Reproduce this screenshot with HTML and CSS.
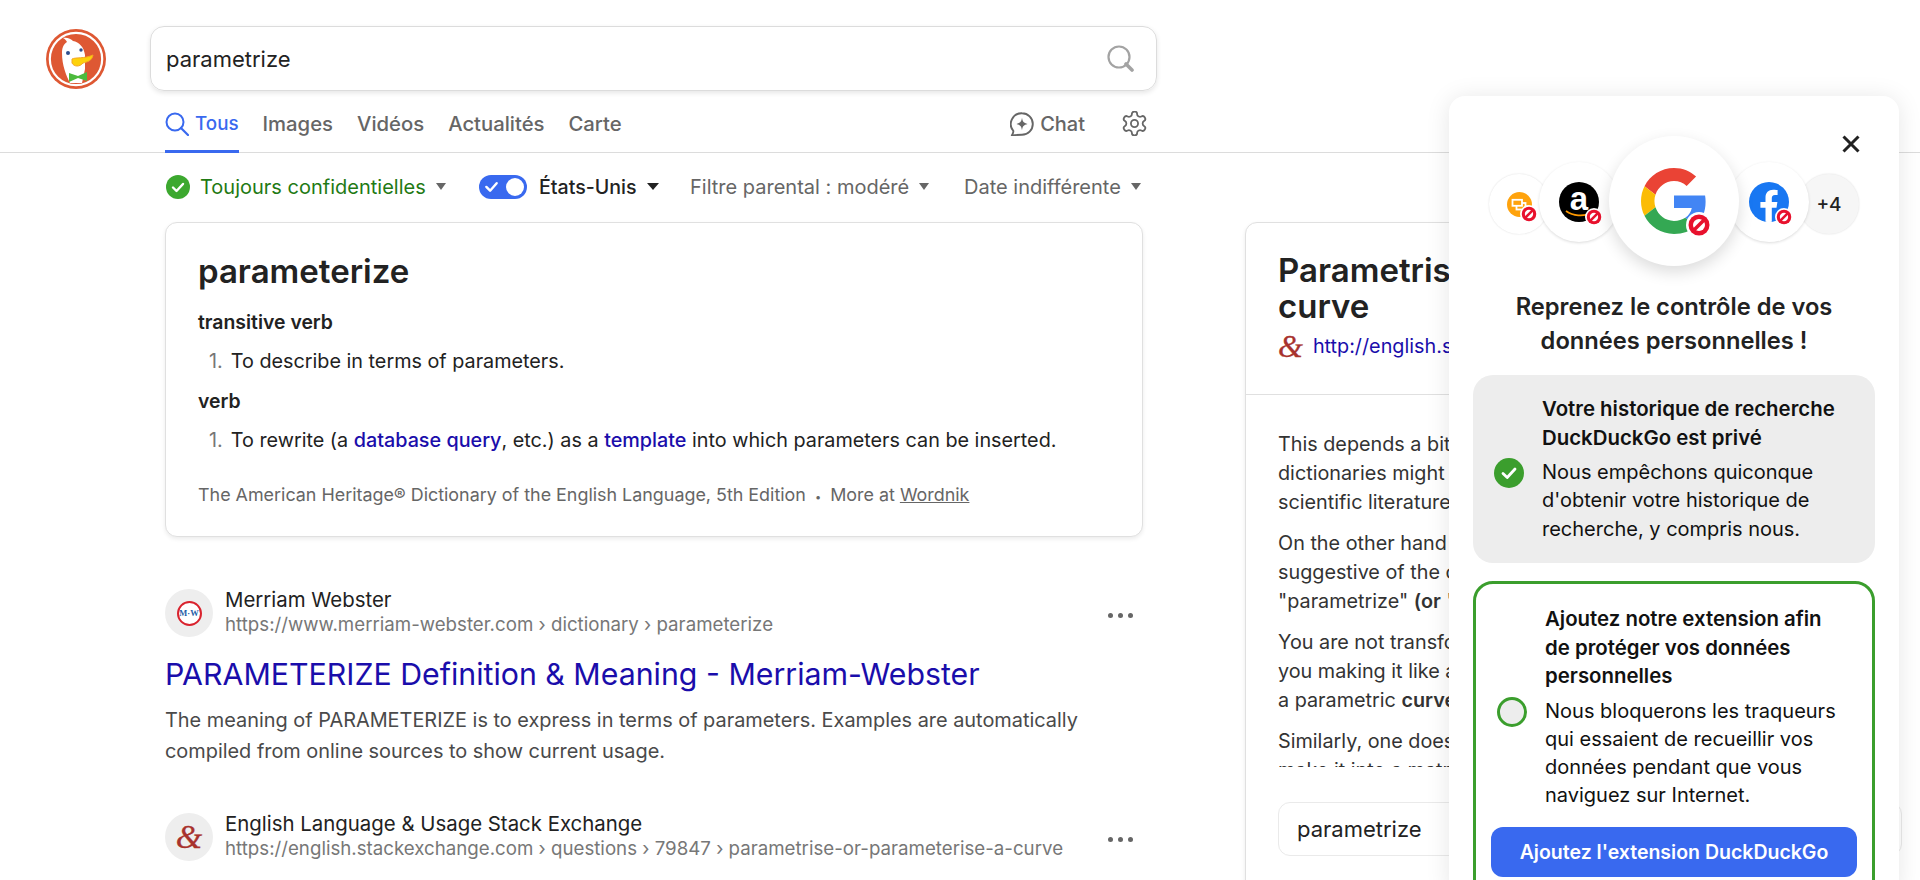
FILE: index.html
```html
<!DOCTYPE html>
<html lang="fr">
<head>
<meta charset="utf-8">
<title>parametrize at DuckDuckGo</title>
<link rel="stylesheet" href="styles.css">
</head>
<body>
<svg class="defs" width="0" height="0" aria-hidden="true">
  <symbol id="block" viewBox="-13 -13 26 26">
    <circle r="13" fill="#fff"/>
    <circle r="10.5" fill="#e8112d"/>
    <circle r="6" fill="#fff"/>
    <path d="M-5.5 5.5 5.5-5.5" stroke="#e8112d" stroke-width="3.6"/>
  </symbol>
</svg>
<div class="page">
  <header class="top">
    <div class="top-row">
      <svg class="logo" viewBox="0 0 60 60" aria-label="DuckDuckGo">
        <circle cx="30" cy="30" r="30" fill="#de5833"/>
        <circle cx="30" cy="30" r="26.2" fill="none" stroke="#fff" stroke-width="2.2"/>
        <path d="M17 9C21 8 25 10 27 12 33 13 38 18 39 26L39 40 36 54 24 54C20 46 16 36 16 24 16 18 18 15 21 13 20 11 19 10 17 9Z" fill="#fff"/>
        <circle cx="22" cy="24" r="2" fill="#2d4f8e"/>
        <circle cx="35" cy="21" r="1.7" fill="#2d4f8e"/>
        <path d="M26 30C30 28 38 30 47 26 46 32 41 33 37 34 34 38 28 38 26 34Z" fill="#fdd20a" stroke="#f5a623" stroke-width="1"/>
        <path d="M23 44 32 47 41 43 41 52 32 49 23 53Z" fill="#4cba3c"/>
      </svg>
      <div class="search">
        <span class="search-text">parametrize</span>
        <svg class="search-icon" viewBox="0 0 27 27"><circle cx="12" cy="12" r="10.5" fill="none" stroke="#a3a3a3" stroke-width="2.2"/><path d="M19 19 25 25" stroke="#a3a3a3" stroke-width="3.6" stroke-linecap="round"/></svg>
      </div>
    </div>
    <nav class="tabs">
      <a class="tab active"><svg class="tab-icon" viewBox="0 0 24 24"><circle cx="10" cy="10" r="8.5" fill="none" stroke="#3969ef" stroke-width="2"/><path d="M16 16 23 23" stroke="#3969ef" stroke-width="2.2" stroke-linecap="round"/></svg>Tous</a>
      <a class="tab">Images</a>
      <a class="tab">Vidéos</a>
      <a class="tab">Actualités</a>
      <a class="tab">Carte</a>
      <span class="spacer"></span>
      <a class="tab chat"><svg class="chat-icon" viewBox="0 0 24 24"><path d="M12 1.2A10.8 10.8 0 0 1 12 22.8C8 22.8 5 23 1.8 23.6 2.8 22 3.4 20.6 3.4 19A10.8 10.8 0 0 1 12 1.2Z" fill="none" stroke="#666" stroke-width="1.9" stroke-linejoin="round"/><path d="M12 5.8C12.6 9.6 13.6 11 17.6 12 13.6 13 12.6 14.4 12 18.2 11.4 14.4 10.4 13 6.4 12 10.4 11 11.4 9.6 12 5.8Z" fill="#666"/></svg>Chat</a>
      <svg class="gear" viewBox="1.5 1.5 21 21" fill="none" stroke="#666" stroke-width="1.5"><path d="M12.22 2h-.44a2 2 0 0 0-2 2v.18a2 2 0 0 1-1 1.73l-.43.25a2 2 0 0 1-2 0l-.15-.08a2 2 0 0 0-2.73.73l-.22.38a2 2 0 0 0 .73 2.73l.15.1a2 2 0 0 1 1 1.72v.51a2 2 0 0 1-1 1.74l-.15.09a2 2 0 0 0-.73 2.73l.22.38a2 2 0 0 0 2.73.73l.15-.08a2 2 0 0 1 2 0l.43.25a2 2 0 0 1 1 1.73V20a2 2 0 0 0 2 2h.44a2 2 0 0 0 2-2v-.18a2 2 0 0 1 1-1.73l.43-.25a2 2 0 0 1 2 0l.15.08a2 2 0 0 0 2.73-.73l.22-.39a2 2 0 0 0-.73-2.73l-.15-.08a2 2 0 0 1-1-1.74v-.5a2 2 0 0 1 1-1.74l.15-.09a2 2 0 0 0 .73-2.73l-.22-.38a2 2 0 0 0-2.73-.73l-.15.08a2 2 0 0 1-2 0l-.43-.25a2 2 0 0 1-1-1.73V4a2 2 0 0 0-2-2z"/><circle cx="12" cy="12" r="3"/></svg>
    </nav>
  </header>

  <div class="filters">
    <span class="filter private"><svg class="check" viewBox="0 0 24 24"><circle cx="12" cy="12" r="12" fill="#3ca82f"/><path d="M7 12.5 10.5 16 17 9" fill="none" stroke="#fff" stroke-width="2.4" stroke-linecap="round" stroke-linejoin="round"/></svg>Toujours confidentielles<i class="caret"></i></span>
    <span class="filter region"><span class="toggle"><svg class="toggle-check" viewBox="0 0 16 16"><path d="M2.5 8.5 6.5 12.5 13.5 4.5" fill="none" stroke="#fff" stroke-width="2.6" stroke-linecap="round" stroke-linejoin="round"/></svg><span class="knob"></span></span>États-Unis<i class="caret dark"></i></span>
    <span class="filter parental">Filtre parental : modéré<i class="caret"></i></span>
    <span class="filter date">Date indifférente<i class="caret"></i></span>
  </div>

  <main class="main">
    <div class="results">
      <section class="card def">
        <h2 class="def-word">parameterize</h2>
        <h3 class="def-pos">transitive verb</h3>
        <ol class="def-list"><li>To describe in terms of parameters.</li></ol>
        <h3 class="def-pos">verb</h3>
        <ol class="def-list"><li>To rewrite (a <a class="link">database query</a>, etc.) as a <a class="link">template</a> into which parameters can be inserted.</li></ol>
        <p class="def-source">The American Heritage® Dictionary of the English Language, 5th Edition <span class="bullet">•</span> More at <u>Wordnik</u></p>
      </section>

      <article class="result first">
        <div class="result-head">
          <span class="fav"><span class="mw">M·W</span></span>
          <div class="result-site">
            <div class="site-name">Merriam Webster</div>
            <div class="site-url">https://www.merriam-webster.com › dictionary › parameterize</div>
          </div>
          <span class="dots"><i></i><i></i><i></i></span>
        </div>
        <h2 class="result-title">PARAMETERIZE Definition &amp; Meaning - Merriam-Webster</h2>
        <p class="snippet">The meaning of PARAMETERIZE is to express in terms of parameters. Examples are automatically compiled from online sources to show current usage.</p>
      </article>

      <article class="result">
        <div class="result-head">
          <span class="fav"><span class="amp">&amp;</span></span>
          <div class="result-site">
            <div class="site-name">English Language &amp; Usage Stack Exchange</div>
            <div class="site-url">https://english.stackexchange.com › questions › 79847 › parametrise-or-parameterise-a-curve</div>
          </div>
          <span class="dots"><i></i><i></i><i></i></span>
        </div>
      </article>
    </div>

    <aside class="card side">
      <div class="side-head">
        <h2 class="side-title">Parametrise or parameterise a<br>curve</h2>
        <div class="side-link"><span class="amp small">&amp;</span><a class="link plain">http://english.stackexchange.com</a></div>
      </div>
      <div class="side-body">
        <div class="side-text">
          <p>This depends a bit on how<br>dictionaries might list it in<br>scientific literature it appears</p>
          <p>On the other hand it is<br>suggestive of the original<br>"parametrize" <b>(or</b> "parametrise"</p>
          <p>You are not transforming it<br>you making it like a new<br>a parametric <b>curve</b> is given</p>
          <p>Similarly, one does not say<br>make it into a matrix form</p>
        </div>
        <div class="side-input">parametrize</div>
      </div>
    </aside>
  </main>

  <aside class="popup">
    <svg class="close" viewBox="0 0 18 18"><path d="M1.5 1.5 16.5 16.5M16.5 1.5 1.5 16.5" stroke="#222" stroke-width="3"/></svg>
    <div class="trackers">
      <span class="tr tr-s"><svg class="fav-orange" viewBox="0 0 25 25"><circle cx="12.500" cy="12.500" r="12.500" fill="#ffa30d"/><rect x="9.500" y="11" width="9" height="6.500" fill="#ffa30d" stroke="#fff" stroke-width="1.800"/><rect x="5.500" y="7.800" width="9.500" height="6" fill="#ffa30d" stroke="#fff" stroke-width="1.800"/></svg><svg class="blk blk-s"><use href="#block"/></svg></span>
      <span class="tr tr-m"><span class="amz">a<svg class="smile" viewBox="0 0 28 8"><path d="M1 1C8 6 18 7 27 3" fill="none" stroke="#f90" stroke-width="1.800"/></svg></span><svg class="blk blk-m"><use href="#block"/></svg></span>
      <span class="tr tr-l"><svg class="g" viewBox="0 0 48 48"><path fill="#EA4335" d="M24 9.5c3.54 0 6.71 1.22 9.21 3.6l6.85-6.85C35.9 2.38 30.47 0 24 0 14.62 0 6.51 5.38 2.56 13.22l7.98 6.19C12.43 13.72 17.74 9.5 24 9.5z"/><path fill="#4285F4" d="M46.98 24.55c0-1.57-.15-3.09-.38-4.55H24v9.02h12.94c-.58 2.96-2.26 5.48-4.78 7.18l7.73 6c4.51-4.18 7.09-10.36 7.09-17.65z"/><path fill="#FBBC05" d="M10.53 28.59c-.48-1.45-.76-2.99-.76-4.59s.27-3.14.76-4.59l-7.98-6.19C.92 16.46 0 20.12 0 24c0 3.88.92 7.54 2.56 10.78l7.97-6.19z"/><path fill="#34A853" d="M24 48c6.48 0 11.93-2.13 15.89-5.81l-7.73-6c-2.15 1.45-4.92 2.3-8.16 2.3-6.26 0-11.57-4.22-13.47-9.91l-7.98 6.19C6.51 42.62 14.62 48 24 48z"/></svg><svg class="blk blk-l"><use href="#block"/></svg></span>
      <span class="tr tr-m"><svg class="fb" viewBox="0 0 40 40"><circle cx="20" cy="20" r="20" fill="#1877f2"/><path d="M27.500 25.800 28.400 20H22.800V16.200C22.800 14.600 23.600 13.100 26 13.100H28.600V8.100S26.300 7.700 24.100 7.700C19.500 7.700 16.500 10.500 16.500 15.500V20H11.400V25.800H16.500V39.800A20 20 0 0 0 22.800 39.800V25.800Z" fill="#fff"/></svg><svg class="blk blk-m"><use href="#block"/></svg></span>
      <span class="tr tr-s more">+4</span>
    </div>
    <h2 class="popup-title">Reprenez le contrôle de vos<br>données personnelles !</h2>
    <div class="step done">
      <svg class="step-check" viewBox="0 0 30 30"><circle cx="15" cy="15" r="15" fill="#3b9e2d"/><path d="M9 15.500 13.200 19.500 21 11" fill="none" stroke="#fff" stroke-width="2.800" stroke-linecap="round" stroke-linejoin="round"/></svg>
      <div class="step-body">
        <h3>Votre historique de recherche DuckDuckGo est privé</h3>
        <p>Nous empêchons quiconque d'obtenir votre historique de recherche, y compris nous.</p>
      </div>
    </div>
    <div class="step current">
      <div class="step-row">
        <span class="step-dot"></span>
        <div class="step-body">
          <h3>Ajoutez notre extension afin de protéger vos données personnelles</h3>
          <p>Nous bloquerons les traqueurs qui essaient de recueillir vos données pendant que vous naviguez sur Internet.</p>
        </div>
      </div>
      <a class="cta">Ajoutez l'extension DuckDuckGo</a>
    </div>
  </aside>
</div>
</body>
</html>
```
FILE: styles.css
```css
* { box-sizing: border-box; }
html, body { margin: 0; height: 100%; }
body { background: #fff; color: #222; font-family: Inter, "Liberation Sans", sans-serif; font-size: 18px; overflow: hidden; }
h2, h3, p, ol { margin: 0; padding: 0; }
.defs { position: absolute; }
.page { position: relative; width: 1920px; height: 880px; overflow: hidden; }

/* header */
.top { height: 153px; border-bottom: 1px solid #dcdcdc; padding-top: 26px; }
.top-row { display: flex; align-items: center; padding-left: 46px; height: 65px; }
.logo { width: 60px; height: 60px; flex: none; }
.search { width: 1007px; height: 65px; margin-left: 44px; border: 1px solid #dcdcdc; border-radius: 14px; box-shadow: 0 2px 5px rgba(0,0,0,.1); display: flex; align-items: center; justify-content: space-between; padding: 0 22px 0 15px; }
.search-text { font-size: 22px; color: #222; }
.search-icon { width: 27px; height: 27px; }
.tabs { display: flex; align-items: center; gap: 24px; margin-left: 165px; width: 982px; height: 61px; }
.tab { display: flex; align-items: center; height: 100%; padding-top: 6px; font-size: 20.300px; font-weight: 500; color: #666; border-bottom: 3px solid transparent; margin-bottom: -1px; }
.tab.active { color: #3969ef; border-bottom-color: #3969ef; font-size: 18.800px; }
.tab-icon { width: 24px; height: 24px; margin-right: 6px; }
.spacer { flex: 1; }
.chat-icon { width: 24px; height: 24px; margin-right: 6px; }
.chat { margin-right: 13px; font-size: 20px; }
.gear { width: 25px; height: 25px; margin-top: 3px; }

/* filters */
.filters { display: flex; align-items: center; height: 66px; margin-left: 166px; padding-top: 1px; font-size: 20px; color: #666; }
.filter { display: flex; align-items: center; white-space: nowrap; }
.private { color: #1f7a14; width: 313px; }
.region { color: #222; font-weight: 500; width: 211px; font-size: 19.600px; }
.parental { width: 274px; }
.caret { width: 0; height: 0; margin-left: 10px; border-left: 5px solid transparent; border-right: 5px solid transparent; border-top: 7px solid #666; }
.caret.dark { border-top-color: #222; border-left-width: 6px; border-right-width: 6px; }
.check { width: 24px; height: 24px; margin-right: 10px; }
.toggle { width: 48px; height: 24px; border-radius: 12px; background: #3969ef; display: flex; align-items: center; justify-content: space-between; padding: 0 3px 0 5px; margin-right: 12px; }
.toggle-check { width: 15px; height: 15px; }
.knob { width: 18px; height: 18px; border-radius: 50%; background: #fff; }

/* main */
.main { display: flex; align-items: flex-start; margin-left: 165px; padding-top: 3px; gap: 102px; }
.results { width: 978px; flex: none; }
.card { border: 1px solid #e0e0e0; border-radius: 12px; background: #fff; }
.def { height: 315px; padding: 28px 32px; box-shadow: 0 2px 4px rgba(0,0,0,.08); }
.def-word { font-size: 33px; font-weight: 600; line-height: 40px; }
.def-pos { font-size: 19.400px; font-weight: 600; line-height: 28px; margin-top: 17px; }
.def-list { list-style: none; margin-top: 11px; padding-left: 11px; font-size: 19.800px; line-height: 28px; }
.def-list + .def-pos { margin-top: 12px; }
.def-list li::before { content: "1."; color: #777; margin-right: 8px; }
.link { color: #1a0dab; font-weight: 500; }
.def-source { margin-top: 28px; font-size: 17.900px; line-height: 26px; color: #666; white-space: nowrap; }
.bullet { font-size: 11px; margin: 0 4px; }

.first { margin-top: 52px; }
.result-head { display: flex; align-items: center; height: 48px; }
.fav { flex: none; width: 48px; height: 48px; border-radius: 50%; background: #eeeeee; display: flex; align-items: center; justify-content: center; margin-right: 12px; }
.mw { width: 25px; height: 25px; border-radius: 50%; border: 2px solid #d9232e; background: #fff; color: #1f5fa8; font: bold 8.500px "Liberation Serif", serif; display: flex; align-items: center; justify-content: center; white-space: nowrap; }
.amp { font: italic 34px/1 "Liberation Serif", serif; color: #a8322d; -webkit-text-stroke: .3px #a8322d; }
.amp.small { font-size: 32px; }
.result-site { flex: 1; min-width: 0; margin-top: -1px; }
.site-name { font-size: 20.400px; line-height: 25px; color: #222; }
.site-url { font-size: 18.700px; line-height: 25.500px; color: #777; white-space: nowrap; }
.dots { display: flex; gap: 5px; margin: 4px 10px 0 0; }
.dots i { width: 5px; height: 5px; border-radius: 50%; background: #666; }
.result-title { font-size: 30.300px; font-weight: 400; line-height: 40px; color: #1a0dab; margin-top: 17px; white-space: nowrap; }
.snippet { font-size: 19.900px; line-height: 31px; color: #4a4a4a; margin-top: 11px; width: 960px; }
.result + .result { margin-top: 46px; }

/* sidebar */
.side { flex: none; width: 640px; height: 700px; border-radius: 12px; box-shadow: 0 2px 4px rgba(0,0,0,.08); }
.side-head { height: 172px; padding: 29px 32px 0; border-bottom: 1px solid #e0e0e0; }
.side-title { font-size: 33px; font-weight: 600; line-height: 36px; white-space: nowrap; }
.side-link { display: flex; align-items: center; margin-top: 7px; height: 30px; }
.side-link .amp { margin-right: 10px; }
.plain { font-weight: 400; font-size: 19.800px; }
.side-body { padding: 35px 32px 0; }
.side-text { height: 337px; overflow: hidden; font-size: 19.800px; line-height: 29px; color: #333; white-space: nowrap; }
.side-text p { margin-bottom: 12px; }
.side-text b { font-weight: 600; }
.side-input { margin-top: 35px; height: 54px; width: 624px; border: 1px solid #eaeaea; border-radius: 12px; padding: 0 18px; display: flex; align-items: center; font-size: 22px; background: #fff; }

/* popup */
.popup { position: absolute; left: 1449px; top: 96px; width: 450px; height: 800px; background: #fff; border-radius: 16px; box-shadow: 0 2px 24px rgba(0,0,0,.1); padding: 40px 24px 0; }
.close { position: absolute; left: 393px; top: 39px; width: 18px; height: 18px; }
.trackers { display: flex; align-items: center; justify-content: center; height: 130px; margin-bottom: 24px; }
.tr { position: relative; flex: none; display: flex; align-items: center; justify-content: center; border-radius: 50%; background: #fff; }
.tr-s { width: 60px; height: 60px; margin-top: 6px; box-shadow: 0 0 2px rgba(0,0,0,.14); z-index: 1; }
.tr-m { width: 80px; height: 80px; margin-top: 2px; margin-left: -10px; margin-right: -10px; box-shadow: 0 1px 3px rgba(0,0,0,.14); z-index: 2; }
.tr-l { width: 130px; height: 130px; box-shadow: 0 6px 16px rgba(0,0,0,.14); z-index: 3; }
.more { background: #f6f6f6; font-size: 19px; font-weight: 500; color: #222; }
.fav-orange { width: 25px; height: 25px; }
.amz { position: relative; width: 40px; height: 40px; border-radius: 50%; background: #000; color: #fff; font: bold 33px/34px "Liberation Sans", sans-serif; text-align: center; }
.smile { position: absolute; left: 6px; bottom: 4px; width: 28px; height: 8px; }
.g { width: 66px; height: 66px; }
.fb { width: 40px; height: 40px; }
.blk { position: absolute; }
.blk-s { width: 18px; height: 18px; left: 31px; top: 31px; }
.blk-m { width: 18px; height: 18px; left: 46px; top: 46px; }
.blk-l { width: 26px; height: 26px; left: 77px; top: 76px; }
.popup-title { font-size: 23.700px; font-weight: 600; line-height: 34px; text-align: center; color: #222; white-space: nowrap; }
.step { position: relative; width: 402px; margin-top: 17px; border-radius: 20px; }
.step h3 { font-size: 20.400px; font-weight: 600; line-height: 28.500px; color: #111; }
.step p { font-size: 20px; line-height: 28.300px; color: #111; margin-top: 6px; }
.done { height: 188px; background: #ededed; padding: 20px 12px 0 21px; display: flex; align-items: center; }
.done .step-body { margin-top: -20px; }
.step-check { flex: none; width: 30px; height: 30px; margin-right: 18px; margin-top: -12px; }
.current { margin-top: 18px; height: 330px; border: 3px solid #3b9e2d; padding: 21px 30px 0 15px; }
.step-row { display: flex; align-items: center; }
.step-dot { flex: none; width: 30px; height: 30px; border-radius: 50%; background: #ededed; border: 3px solid #3b9e2d; margin-left: 6px; margin-right: 18px; margin-top: 10px; }
.cta { display: flex; align-items: center; justify-content: center; width: 366px; height: 50px; margin-top: 17px; border-radius: 12px; background: #3969ef; color: #fff; font-size: 19.500px; font-weight: 600; }
```
